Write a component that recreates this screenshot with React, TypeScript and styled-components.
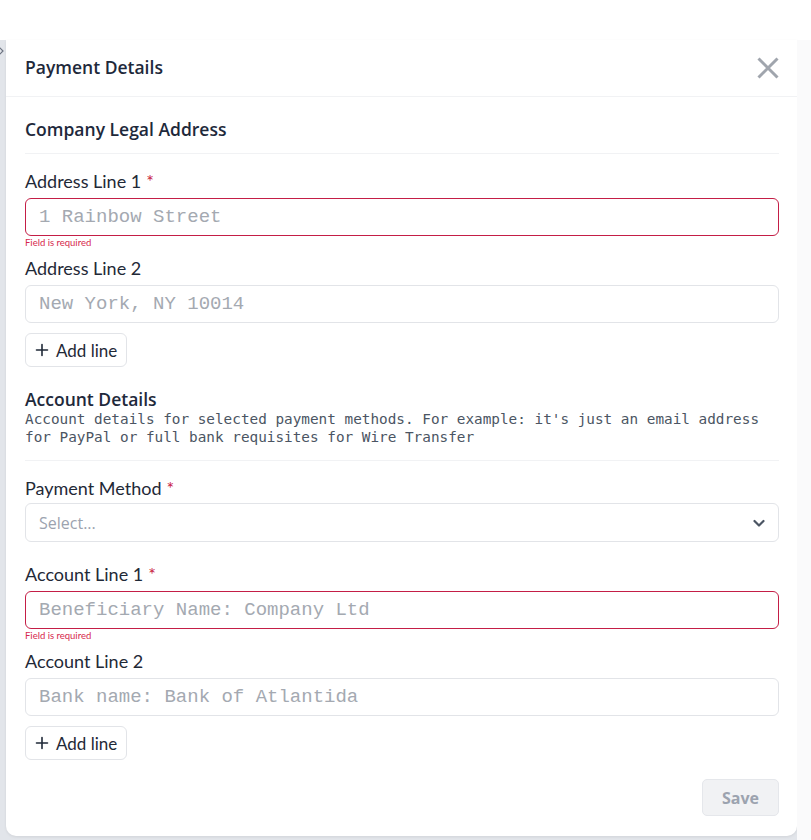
import styled, { createGlobalStyle } from 'styled-components'

const GlobalStyle = createGlobalStyle`
  html, body { margin: 0; padding: 0; background: #ffffff; }
  body {
    font-family: Lato, "Noto Sans", sans-serif;
    color: #1f2937;
  }
  * { box-sizing: border-box; }
`

interface FieldProps {
  label: string
  placeholder: string
  required?: boolean
  error?: string
}

const Field: React.FC<FieldProps> = (props) => (
  <FieldBox>
    <Label>
      {props.label}
      {props.required && <Star>*</Star>}
    </Label>
    <Input placeholder={props.placeholder} $invalid={!!props.error} />
    {props.error && <ErrorText>{props.error}</ErrorText>}
  </FieldBox>
)

const AddLine = () => (
  <AddButton type="button">
    <svg width="14" height="14" viewBox="0 0 14 14" fill="none" stroke="#1f2937" strokeWidth="1.6" strokeLinecap="round">
      <path d="M7 1.5v11M1.5 7h11" />
    </svg>
    Add line
  </AddButton>
)

const App = () => {
  return (
    <>
      <GlobalStyle />
      <Page>
        <TopSpace />
        <Backdrop>
          <EdgeChevron width="8" height="12" viewBox="0 0 8 12" fill="none" stroke="#6b7280" strokeWidth="1.2">
            <path d="M1 1l5 5-5 5" />
          </EdgeChevron>
          <Panel>
            <Header>
              <Title>Payment Details</Title>
              <CloseButton type="button" aria-label="Close">
                <svg width="22" height="22" viewBox="0 0 22 22" fill="none" stroke="#a0a5ad" strokeWidth="3">
                  <path d="M1.5 1.5l19 19M20.5 1.5l-19 19" />
                </svg>
              </CloseButton>
            </Header>
            <Body>
              <Section>
                <SectionHead>
                  <SectionTitle>Company Legal Address</SectionTitle>
                </SectionHead>
                <Fields>
                  <Field label="Address Line 1" required placeholder="1 Rainbow Street" error="Field is required" />
                  <Field label="Address Line 2" placeholder="New York, NY 10014" />
                </Fields>
                <AddLine />
              </Section>
              <Section>
                <SectionHead>
                  <SectionTitle>Account Details</SectionTitle>
                  <Description>
                    Account details for selected payment methods. For example: it's just an email address
                    for PayPal or full bank requisites for Wire Transfer
                  </Description>
                </SectionHead>
                <Fields>
                  <FieldBox>
                    <Label $tight>
                      Payment Method<Star>*</Star>
                    </Label>
                    <Select>
                      <span>Select...</span>
                      <svg width="14" height="14" viewBox="0 0 14 14" fill="none" stroke="#4b5563" strokeWidth="2.2" strokeLinecap="round" strokeLinejoin="round">
                        <path d="M2.5 5l4.5 4.5L11.5 5" />
                      </svg>
                    </Select>
                  </FieldBox>
                  <Field label="Account Line 1" required placeholder="Beneficiary Name: Company Ltd" error="Field is required" />
                  <Field label="Account Line 2" placeholder="Bank name: Bank of Atlantida" />
                </Fields>
                <AddLine />
              </Section>
              <Footer>
                <SaveButton type="button" disabled>Save</SaveButton>
              </Footer>
            </Body>
          </Panel>
          <RightEdge />
        </Backdrop>
      </Page>
    </>
  )
}

export default App

const Page = styled.div`
  width: 811px;
  height: 840px;
  overflow: hidden;
  display: flex;
  flex-direction: column;
`
const TopSpace = styled.div`
  height: 40px;
  background: #ffffff;
`
const Backdrop = styled.div`
  flex: 1;
  display: flex;
  background: #e2e5ea;
  position: relative;
`
const EdgeChevron = styled.svg`
  position: absolute;
  left: -3px;
  top: 5px;
`
const RightEdge = styled.div`
  flex: 1;
  background: #fafafb;
`
const Panel = styled.div`
  margin-left: 6px;
  width: 791px;
  height: 796px;
  background: #ffffff;
  border-radius: 0 0 10px 10px;
  box-shadow: 0 1px 3px rgba(0, 0, 0, 0.08);
  display: flex;
  flex-direction: column;
`
const Header = styled.header`
  height: 57px;
  padding: 0 18px 0 19px;
  display: flex;
  align-items: center;
  justify-content: space-between;
  border-bottom: 1px solid #f1f2f4;
`
const Title = styled.h2`
  margin: 0;
  margin-top: -2px;
  font-family: "Open Sans", Lato, sans-serif;
  font-size: 17.5px;
  font-weight: 600;
  color: #1e293b;
`
const CloseButton = styled.button`
  border: none;
  background: none;
  padding: 0;
  display: flex;
  cursor: pointer;
`
const Body = styled.div`
  padding: 21px 18px 0 19px;
  display: flex;
  flex-direction: column;
`
const Section = styled.section`
  display: flex;
  flex-direction: column;
  align-items: flex-start;
  margin-bottom: 21px;
  &:last-of-type {
    margin-bottom: 19px;
  }
`
const SectionHead = styled.div`
  width: 100%;
  padding-bottom: 13px;
  border-bottom: 1px solid #f1f2f4;
  margin-bottom: 16px;
`
const SectionTitle = styled.h3`
  margin: 0;
  font-family: "Open Sans", Lato, sans-serif;
  font-size: 17.5px;
  font-weight: 600;
  color: #1e293b;
  line-height: 22px;
`
const Description = styled.p`
  margin: 0 0 1px;
  font-family: "DejaVu Sans Mono", "Liberation Mono", monospace;
  font-size: 14.35px;
  line-height: 18px;
  color: #4b5563;
  width: 762px;
`
const Fields = styled.div`
  width: 100%;
  display: flex;
  flex-direction: column;
  gap: 21px;
`
const FieldBox = styled.div`
  display: flex;
  flex-direction: column;
  width: 100%;
`
const Label = styled.label<{ $tight?: boolean }>`
  font-size: 18px;
  line-height: 22px;
  color: #1f2937;
  margin-bottom: ${(p) => (p.$tight ? '4px' : '6px')};
`
const Star = styled.span`
  color: #c8203f;
  margin-left: 5px;
`
const Input = styled.input<{ $invalid?: boolean }>`
  width: 100%;
  height: 38px;
  border: 1px solid ${(p) => (p.$invalid ? '#c41e46' : '#e2e4e8')};
  border-radius: 6px;
  padding: 0 13px;
  font-family: "Liberation Mono", "DejaVu Sans Mono", monospace;
  font-size: 19px;
  color: #1f2937;
  outline: none;
  &::placeholder {
    color: #a4a9b1;
  }
`
const ErrorText = styled.span`
  font-size: 9.5px;
  color: #d6284d;
  margin-top: 2px;
  line-height: 10px;
  margin-bottom: -12px;
`
const Select = styled.div`
  width: 100%;
  height: 39px;
  border: 1px solid #e2e4e8;
  border-radius: 6px;
  padding: 0 12px 0 13px;
  display: flex;
  align-items: center;
  justify-content: space-between;
  font-family: "Open Sans", Lato, sans-serif;
  font-size: 16px;
  color: #9ca3af;
`
const AddButton = styled.button`
  display: flex;
  align-items: center;
  gap: 7px;
  height: 34px;
  margin-top: 10px;
  padding: 0 9px 0 9px;
  border: 1px solid #e2e4e8;
  border-radius: 6px;
  background: #ffffff;
  font-family: Lato, "Noto Sans", sans-serif;
  font-size: 17px;
  color: #1f2937;
`
const Footer = styled.footer`
  display: flex;
  justify-content: flex-end;
`
const SaveButton = styled.button`
  width: 77px;
  height: 37px;
  border: 1px solid #e5e7eb;
  border-radius: 5px;
  background: #f1f2f4;
  font-family: "Open Sans", Lato, sans-serif;
  font-size: 16px;
  font-weight: 700;
  color: #9ca3af;
`
